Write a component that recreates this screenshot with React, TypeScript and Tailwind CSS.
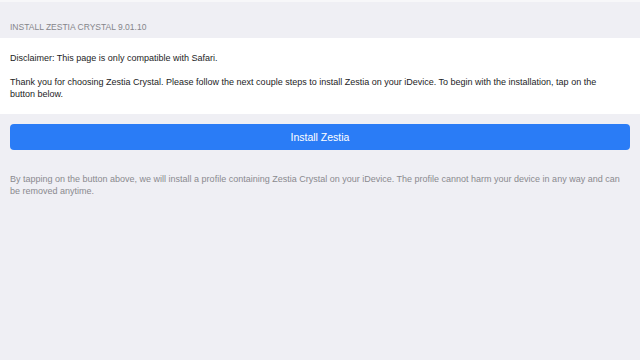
export default function App() {
  return (
    <div
      className="w-[640px] h-[360px] bg-[#efeff4] border-t-2 border-[#f7f7f9] text-[9px] leading-[12px]"
      style={{ fontFamily: '"Liberation Sans", Arial, sans-serif' }}
    >
      {/* Section header */}
      <div className="px-[10px] pt-[19px] pb-[5px] text-[8.5px] text-[#85858a] uppercase">
        Install Zestia Crystal 9.01.10
      </div>

      {/* Info card */}
      <div className="bg-white pl-[10px] pr-[28px] pt-[14px] pb-[14px] text-[#1c1c1e]">
        <p>Disclaimer: This page is only compatible with Safari.</p>
        <p className="mt-[12px]">
          Thank you for choosing Zestia Crystal. Please follow the next couple steps to install Zestia on your
          iDevice. To begin with the installation, tap on the button below.
        </p>
      </div>

      {/* Install button */}
      <div className="px-[10px] pt-[10px]">
        <button className="w-full h-[26px] rounded-[4px] bg-[#2a7cf6] text-white text-[10.5px]">
          Install Zestia
        </button>
      </div>

      {/* Footer note */}
      <p className="px-[10px] pt-[23px] text-[#8a8a8f]">
        By tapping on the button above, we will install a profile containing Zestia Crystal on your iDevice. The
        profile cannot harm your device in any way and can be removed anytime.
      </p>
    </div>
  )
}
